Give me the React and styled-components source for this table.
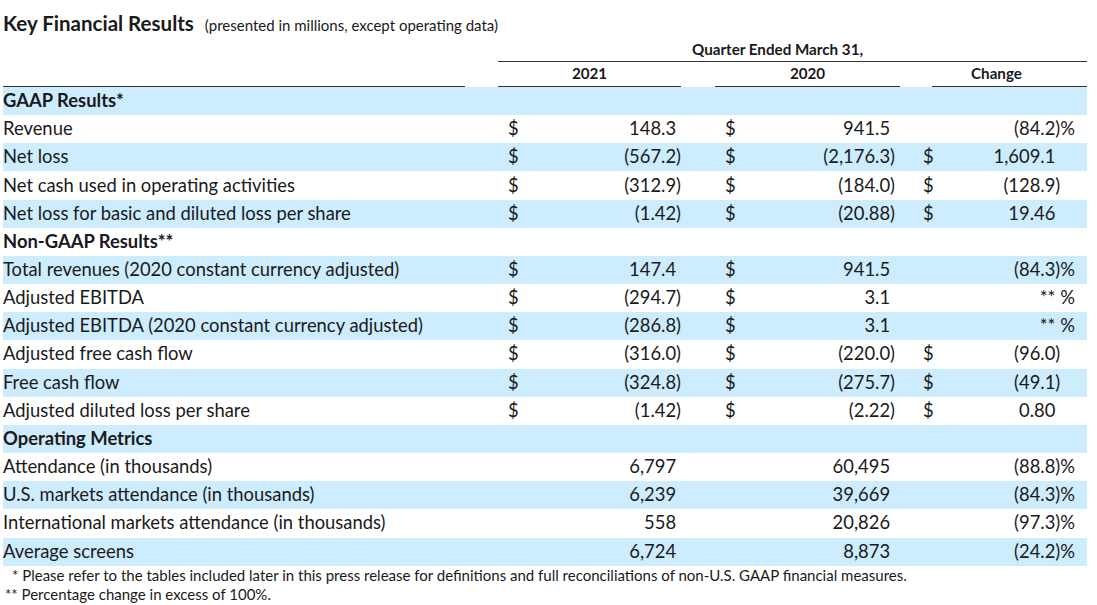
import React from 'react';
import styled, { createGlobalStyle } from 'styled-components';

const COLS = '462px 33px 183px 34px 185px 32px 155px';

const rows = [
  { head: 'GAAP Results*' },
  { label: 'Revenue', a: '148.3', b: '941.5', c: '(84.2)', pct: true },
  { label: 'Net loss', a: '(567.2)', b: '(2,176.3)', c: '1,609.1' },
  { label: 'Net cash used in operating activities', a: '(312.9)', b: '(184.0)', c: '(128.9)' },
  { label: 'Net loss for basic and diluted loss per share', a: '(1.42)', b: '(20.88)', c: '19.46' },
  { head: 'Non-GAAP Results**' },
  { label: 'Total revenues (2020 constant currency adjusted)', a: '147.4', b: '941.5', c: '(84.3)', pct: true },
  { label: 'Adjusted EBITDA', a: '(294.7)', b: '3.1', c: '**', pct: true },
  { label: 'Adjusted EBITDA (2020 constant currency adjusted)', a: '(286.8)', b: '3.1', c: '**', pct: true },
  { label: 'Adjusted free cash flow', a: '(316.0)', b: '(220.0)', c: '(96.0)' },
  { label: 'Free cash flow', a: '(324.8)', b: '(275.7)', c: '(49.1)' },
  { label: 'Adjusted diluted loss per share', a: '(1.42)', b: '(2.22)', c: '0.80' },
  { head: 'Operating Metrics' },
  { label: 'Attendance (in thousands)', a: '6,797', b: '60,495', c: '(88.8)', pct: true, plain: true },
  { label: 'U.S. markets attendance (in thousands)', a: '6,239', b: '39,669', c: '(84.3)', pct: true, plain: true },
  { label: 'International markets attendance (in thousands)', a: '558', b: '20,826', c: '(97.3)', pct: true, plain: true },
  { label: 'Average screens', a: '6,724', b: '8,873', c: '(24.2)', pct: true, plain: true },
];

const GlobalStyle = createGlobalStyle`
  body {
    margin: 0;
    background: #fff;
    font-family: Lato, 'Open Sans', sans-serif;
    color: #1a1a1a;
  }
`;

const Page = styled.div`
  width: 1084px;
  padding-left: 3px;
`;

const TitleBar = styled.div`
  height: 38px;
  padding-top: 12px;
  box-sizing: border-box;
  display: flex;
  align-items: baseline;
  gap: 11px;
  white-space: nowrap;
`;

const Title = styled.h1`
  margin: 0;
  font-size: 20.5px;
  font-weight: 700;
  line-height: 22px;
`;

const Subtitle = styled.span`
  font-size: 15px;
`;

const HeaderGrid = styled.div`
  display: grid;
  grid-template-columns: ${COLS};
  font-size: 15.2px;
  font-weight: 700;
  white-space: nowrap;
`;

const Quarter = styled.div`
  grid-column: 3 / 8;
  height: 23px;
  line-height: 23px;
  text-align: center;
  padding-right: 30px;
  border-bottom: 1px solid #333;
`;

const ColHead = styled.div`
  grid-column: ${p => p.$col};
  height: 24px;
  line-height: 23px;
  text-align: center;
  padding-right: ${p => p.$pr || 0}px;
  border-bottom: ${p => (p.$line ? '1px solid #333' : 'none')};
`;

const Row = styled.div`
  display: grid;
  grid-template-columns: ${COLS};
  align-items: center;
  height: 28.17px;
  padding-bottom: 2px;
  box-sizing: border-box;
  font-size: 18.4px;
  background: ${p => (p.$shade ? '#cdecfe' : 'transparent')};
  white-space: nowrap;
`;

const Label = styled.div`
  grid-column: 1 / 3;
  font-weight: ${p => (p.$bold ? 700 : 400)};
`;

const Amount = styled.div`
  grid-column: ${p => p.$col};
  display: flex;
  justify-content: space-between;
  padding-left: ${p => p.$pl}px;
  padding-right: ${p => p.$pr}px;
`;

const Hidden = styled.span`
  visibility: hidden;
`;

const Footnotes = styled.div`
  font-size: 15px;
  line-height: 19.5px;
  white-space: nowrap;
`;

const Note = styled.div`
  padding-left: ${p => p.$indent || 0}px;
`;

// accounting alignment: positives keep an invisible ")" (and "%") so digits line up
function Num({ text, pct, withPct }) {
  const neg = text.startsWith('(');
  return (
    <span>
      {neg ? text.slice(0, -1) : text}
      {neg ? ')' : <Hidden>)</Hidden>}
      {withPct && (pct ? '%' : <Hidden>%</Hidden>)}
    </span>
  );
}

function Money({ col, pl, pr, sign, text, pct, withPct }) {
  return (
    <Amount $col={col} $pl={pl} $pr={pr}>
      <span>{sign ? '$' : ''}</span>
      <Num text={text} pct={pct} withPct={withPct} />
    </Amount>
  );
}

export default function App() {
  return (
    <Page>
      <GlobalStyle />
      <TitleBar>
        <Title>Key Financial Results</Title>
        <Subtitle>(presented in millions, except operating data)</Subtitle>
      </TitleBar>
      <HeaderGrid>
        <Quarter>Quarter Ended March 31,</Quarter>
        <ColHead $col="1" $line />
        <ColHead $col="3" $line>2021</ColHead>
        <ColHead $col="5" $line>2020</ColHead>
        <ColHead $col="7" $line $pr={26}>Change</ColHead>
      </HeaderGrid>
      {rows.map((r, i) =>
        r.head ? (
          <Row key={i} $shade={i % 2 === 0}>
            <Label $bold>{r.head}</Label>
          </Row>
        ) : (
          <Row key={i} $shade={i % 2 === 0}>
            <Label>{r.label}</Label>
            <Money col="3" pl={10} pr={0} sign={!r.plain} text={r.a} />
            <Money col="5" pl={10} pr={5} sign={!r.plain} text={r.b} />
            <Money col="6 / 8" pl={23} pr={12} sign={!r.pct} text={r.c} pct={r.pct} withPct />
          </Row>
        )
      )}
      <Footnotes>
        <Note $indent={9}>* Please refer to the tables included later in this press release for definitions and full reconciliations of non-U.S. GAAP financial measures.</Note>
        <Note $indent={2}>** Percentage change in excess of 100%.</Note>
      </Footnotes>
    </Page>
  );
}
